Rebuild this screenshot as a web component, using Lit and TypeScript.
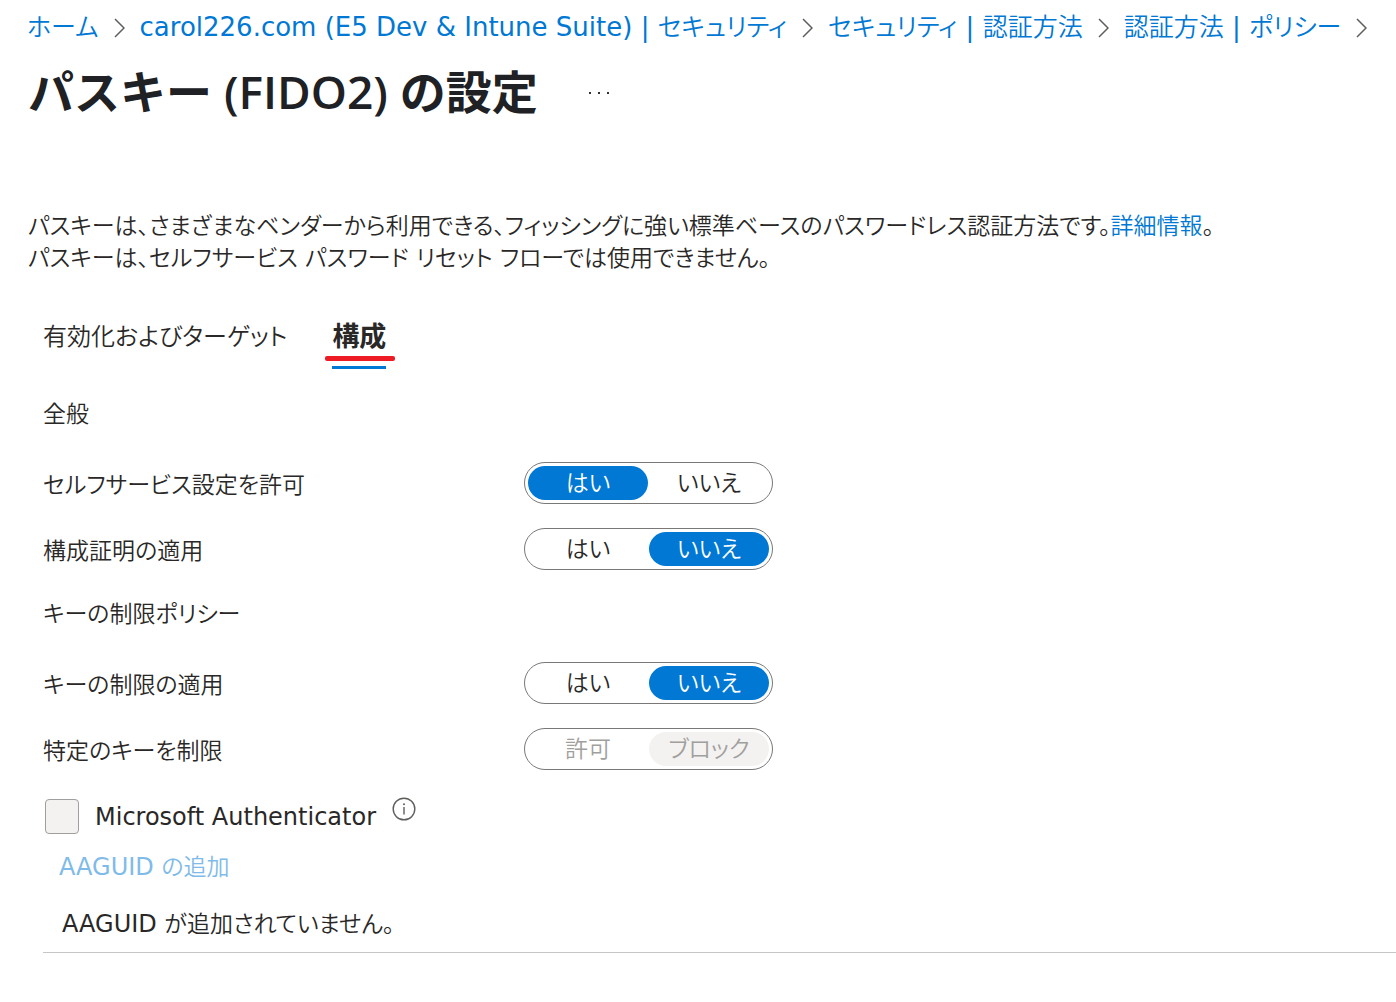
import { LitElement, html, css, nothing } from "lit";
import { customElement, property, state } from "lit/decorators.js";

const crumbs = [
  "ホーム",
  "carol226.com (E5 Dev & Intune Suite) | セキュリティ",
  "セキュリティ | 認証方法",
  "認証方法 | ポリシー",
];

/* Wraps each run of Latin characters so that it can carry its own size and weight. */
const mixed = (text: string) =>
  text
    .split(/([\x20-\x7e]+)/)
    .filter(Boolean)
    .map((run) => (/^[\x20-\x7e]/.test(run) ? html`<span class="latin">${run}</span>` : run));

@customElement("option-switch")
class OptionSwitch extends LitElement {
  @property() name = "";
  @property() label = "";
  @property({ type: Array }) options: string[] = [];
  @property({ type: Number }) selected = 0;
  @property({ type: Boolean }) disabled = false;

  static styles = css`
    :host {
      display: block;
    }
    .row {
      display: grid;
      grid-template-columns: 481px 249px;
      align-items: center;
    }
    .label {
      padding-top: 3px;
    }
    .switch {
      box-sizing: border-box;
      display: grid;
      grid-template-columns: 1fr 1fr;
      gap: 1px;
      height: 42px;
      padding: 3px;
      border: 1px solid #7a7876;
      border-radius: 21px;
    }
    .option {
      display: grid;
      place-items: center;
      border-radius: 17px;
      line-height: 34px;
      cursor: pointer;
    }
    .radio {
      appearance: none;
      margin: 0;
      width: 0;
      height: 0;
      grid-area: 1 / 1;
    }
    .text {
      grid-area: 1 / 1;
    }
    .option:has(.radio:checked) {
      background: #0078d4;
      color: #fff;
    }
    .option:has(.radio:disabled) {
      color: #a19f9d;
      cursor: default;
    }
    .option:has(.radio:checked:disabled) {
      background: #f3f2f1;
    }
  `;

  render() {
    return html`
      <div class="row">
        <span class="label" id="label">${this.label}</span>
        <div class="switch" role="radiogroup" aria-labelledby="label">
          ${this.options.map(
            (text, i) => html`
              <label class="option">
                <input
                  class="radio"
                  type="radio"
                  name=${this.name}
                  .checked=${i === this.selected}
                  ?disabled=${this.disabled}
                  @change=${() => (this.selected = i)}
                />
                <span class="text">${text}</span>
              </label>
            `
          )}
        </div>
      </div>
    `;
  }
}

@customElement("app-root")
class AppRoot extends LitElement {
  @state() private tab = 1;

  static styles = css`
    :host {
      display: block;
      background: #fff;
      color: #292827;
      font-family: "DejaVu Sans", "Noto Sans CJK JP", sans-serif;
      font-size: 23px;
      font-weight: 350;
      line-height: 32px;
      font-feature-settings: "palt";
      overflow: hidden;
    }
    a {
      color: #0078d4;
      text-decoration: none;
    }
    button {
      padding: 0;
      border: 0;
      background: none;
      color: inherit;
      font: inherit;
      font-feature-settings: inherit;
      cursor: pointer;
    }
    .latin {
      font-size: 24px;
      font-weight: 400;
    }
    .crumbs {
      display: flex;
      align-items: center;
      gap: 15px;
      margin: 0;
      padding: 7px 0 0 27px;
      list-style: none;
      font-size: 25px;
      line-height: 40px;
      white-space: nowrap;
    }
    .crumbs .latin {
      font-size: 26px;
    }
    .crumb {
      display: flex;
      align-items: center;
      gap: 15px;
    }
    .chevron {
      width: 11px;
      height: 20px;
      fill: none;
      stroke: #605e5c;
      stroke-width: 1.5;
    }
    .heading {
      display: flex;
      align-items: center;
      gap: 50px;
      margin-top: 13px;
      padding-left: 28px;
    }
    .title {
      margin: 0;
      color: #202124;
      font-family: "Open Sans", "Noto Sans CJK JP", sans-serif;
      font-size: 46px;
      font-weight: 600;
      line-height: 60px;
      font-feature-settings: normal;
    }
    .more {
      display: flex;
    }
    .dots {
      width: 24px;
      height: 24px;
      fill: #323130;
    }
    .intro {
      margin: 89px 0 0;
      padding-left: 28px;
    }
    .panel {
      padding-left: 43px;
    }
    .tabs {
      display: flex;
      gap: 45px;
      margin: 46px 0 29px;
    }
    .tab {
      position: relative;
      padding-bottom: 12px;
      border-bottom: 3px solid transparent;
      font-size: 24px;
      line-height: 34px;
    }
    .tab.active {
      border-bottom-color: #0078d4;
      font-size: 27px;
      font-weight: 700;
    }
    .mark {
      position: absolute;
      left: -7px;
      right: -9px;
      top: 36px;
      height: 5px;
      border-radius: 2px;
      background: #ed1c24;
    }
    .section {
      margin: 28px 0 32px;
      font-size: inherit;
      font-weight: inherit;
    }
    .group {
      display: grid;
      gap: 24px;
    }
    .check {
      display: flex;
      align-items: center;
      gap: 16px;
      margin: 29px 0 0 2px;
    }
    .box {
      appearance: none;
      box-sizing: border-box;
      width: 34px;
      height: 35px;
      margin: 0;
      border: 1px solid #a19f9d;
      border-radius: 4px;
      background: #f3f2f1;
    }
    .info {
      display: flex;
      align-self: flex-start;
      margin-top: -2px;
    }
    .info-icon {
      width: 24px;
      height: 24px;
    }
    .add {
      display: block;
      margin: 17px 0 0 16px;
      color: #7fbbe9;
    }
    .empty {
      margin: 25px 0 0;
      padding: 0 0 12px 19px;
      border-bottom: 1px solid #c8c6c4;
    }
  `;

  private renderTab(text: string, index: number) {
    const active = this.tab === index;
    return html`
      <button
        class="tab ${active ? "active" : ""}"
        role="tab"
        aria-selected=${active}
        @click=${() => (this.tab = index)}
      >
        ${text}${active ? html`<span class="mark"></span>` : nothing}
      </button>
    `;
  }

  render() {
    const yesNo = ["はい", "いいえ"];
    return html`
      <nav>
        <ol class="crumbs">
          ${crumbs.map(
            (text) => html`
              <li class="crumb">
                <a href="#">${mixed(text)}</a>
                <svg class="chevron" viewBox="0 0 11 20" aria-hidden="true">
                  <path d="M1 1l9 9l-9 9" />
                </svg>
              </li>
            `
          )}
        </ol>
      </nav>
      <header class="heading">
        <h1 class="title">パスキー (FIDO2) の設定</h1>
        <button class="more" aria-label="その他">
          <svg class="dots" viewBox="0 0 24 24" aria-hidden="true">
            <rect x="1" y="13" width="2" height="2" />
            <rect x="10" y="13" width="2" height="2" />
            <rect x="19" y="13" width="2" height="2" />
          </svg>
        </button>
      </header>
      <main>
        <p class="intro">
          パスキーは、さまざまなベンダーから利用できる、フィッシングに強い標準ベースのパスワードレス認証方法です。<a
            href="#"
            >詳細情報</a
          >。<br />パスキーは、セルフサービス パスワード リセット フローでは使用できません。
        </p>
        <div class="panel">
          <div class="tabs" role="tablist">
            ${this.renderTab("有効化およびターゲット", 0)}
            ${this.renderTab("構成", 1)}
          </div>
          <h2 class="section">全般</h2>
          <div class="group">
            <option-switch name="self" label="セルフサービス設定を許可" .options=${yesNo} .selected=${0}></option-switch>
            <option-switch name="attest" label="構成証明の適用" .options=${yesNo} .selected=${1}></option-switch>
          </div>
          <h2 class="section">キーの制限ポリシー</h2>
          <div class="group">
            <option-switch name="enforce" label="キーの制限の適用" .options=${yesNo} .selected=${1}></option-switch>
            <option-switch name="restrict" label="特定のキーを制限" .options=${["許可", "ブロック"]} .selected=${1} disabled></option-switch>
          </div>
          <div class="check">
            <input class="box" id="authenticator" type="checkbox" disabled />
            <label for="authenticator">${mixed("Microsoft Authenticator")}</label>
            <button class="info" aria-label="情報">
              <svg class="info-icon" viewBox="0 0 24 24" aria-hidden="true">
                <circle cx="12" cy="12" r="10.8" fill="none" stroke="#605e5c" stroke-width="1.4" />
                <path d="M12 10v7.5" stroke="#605e5c" stroke-width="1.4" />
                <circle cx="12" cy="7.2" r="1" fill="#605e5c" />
              </svg>
            </button>
          </div>
          <button class="add" disabled>${mixed("AAGUID の追加")}</button>
          <p class="empty">${mixed("AAGUID が追加されていません。")}</p>
        </div>
      </main>
    `;
  }
}
